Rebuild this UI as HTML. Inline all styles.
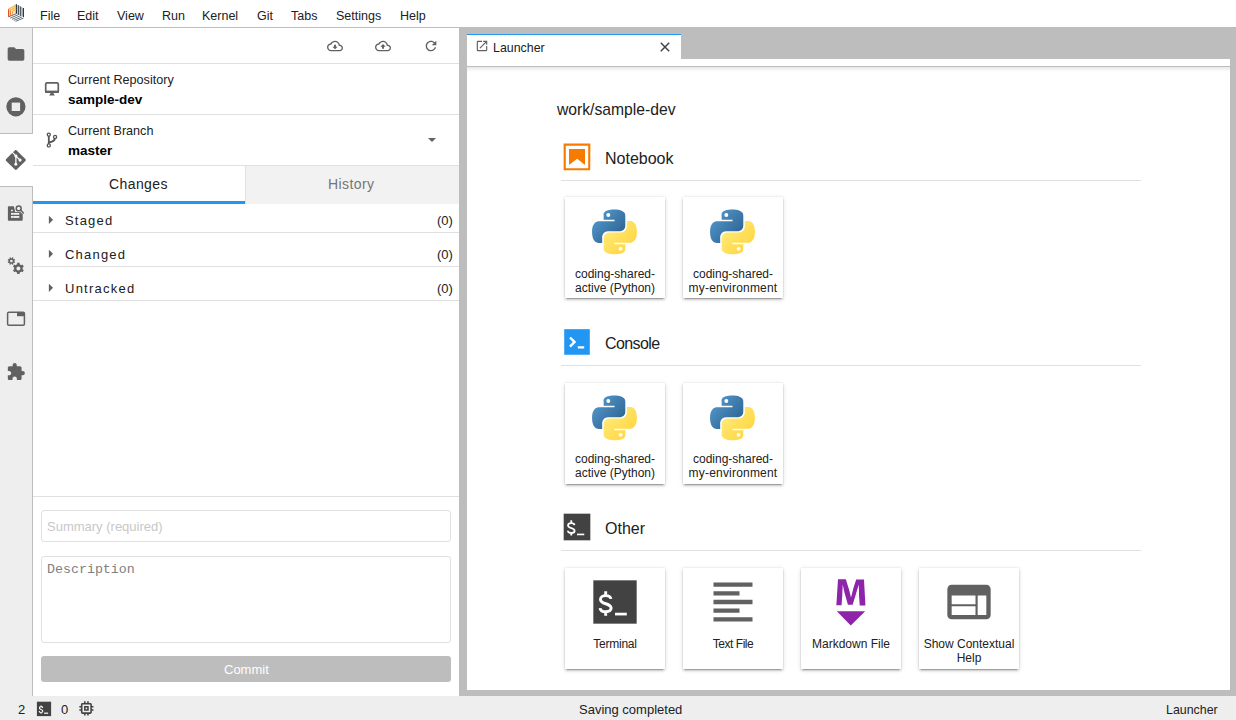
<!DOCTYPE html>
<html><head><meta charset="utf-8">
<style>
*{box-sizing:border-box;margin:0;padding:0}
html,body{width:1236px;height:720px;overflow:hidden;background:#fff;font-family:"Liberation Sans",sans-serif;color:#212121}
.a{position:absolute}
.t{position:absolute;white-space:nowrap;line-height:1}
svg{position:absolute;display:block}
</style></head><body>
<!-- MENUBAR -->
<div class="a" style="left:0;top:0;width:1236px;height:27px;background:#fff"></div>
<div class="a" style="left:0;top:27px;width:1236px;height:1px;background:#bdbdbd"></div>
<div id="menu" style="font-size:12.5px">
<span class="t" style="left:40px;top:10px">File</span>
<span class="t" style="left:77px;top:10px">Edit</span>
<span class="t" style="left:117px;top:10px">View</span>
<span class="t" style="left:162px;top:10px">Run</span>
<span class="t" style="left:202px;top:10px">Kernel</span>
<span class="t" style="left:257px;top:10px">Git</span>
<span class="t" style="left:291px;top:10px">Tabs</span>
<span class="t" style="left:336px;top:10px">Settings</span>
<span class="t" style="left:400px;top:10px">Help</span>
</div>

<!-- LEFT SIDEBAR -->
<div class="a" style="left:0;top:28px;width:32px;height:668px;background:#eeeeee"></div>
<div class="a" style="left:32px;top:28px;width:1px;height:668px;background:#bdbdbd"></div>
<div class="a" style="left:0;top:133px;width:33px;height:1px;background:#bdbdbd"></div>
<div class="a" style="left:0;top:134px;width:33px;height:52px;background:#fff"></div>
<div class="a" style="left:0;top:186px;width:33px;height:1px;background:#bdbdbd"></div>

<!-- SIDEBAR ICONS -->
<svg style="left:0;top:0" width="33" height="400" viewBox="0 0 33 400">
<g fill="#616161">
<!-- folder -->
<g transform="translate(6,44) scale(0.8333)"><path d="M10 4H4c-1.1 0-1.99.9-1.99 2L2 18c0 1.1.9 2 2 2h16c1.1 0 2-.9 2-2V8c0-1.1-.9-2-2-2h-8l-2-2z"/></g>
<!-- stop circle -->
<circle cx="15.9" cy="106.8" r="9.6"/>
<rect x="11.7" y="102.6" width="8.4" height="8.4" fill="#eeeeee"/>
<!-- git -->
<g transform="translate(5.8,150) scale(0.8333)"><path d="M23.546 10.93L13.067.452c-.604-.603-1.582-.603-2.188 0L8.708 2.627l2.76 2.76c.645-.215 1.379-.07 1.889.441.516.515.658 1.258.438 1.9l2.658 2.66c.645-.223 1.387-.078 1.9.435.721.72.721 1.884 0 2.604-.719.719-1.881.719-2.6 0-.539-.541-.674-1.337-.404-1.996L12.86 8.955v6.525c.176.086.342.203.488.348.713.721.713 1.883 0 2.6-.719.721-1.889.721-2.609 0-.719-.719-.719-1.879 0-2.598.182-.18.387-.316.605-.406V8.835c-.217-.091-.424-.222-.6-.401-.545-.545-.676-1.342-.396-2.009L7.636 3.7.45 10.881c-.6.605-.6 1.584 0 2.189l10.48 10.477c.604.604 1.582.604 2.186 0l10.43-10.43c.605-.603.605-1.582 0-2.187"/></g>
<!-- property inspector -->
<path d="M7.9 207a0.8 0.8 0 0 1 0.8-0.8H13.8L15.2 212H20.1L22.7 213.9V220a0.7 0.7 0 0 1-0.7 0.7H8.6a0.7 0.7 0 0 1-0.7-0.7z"/>
<g fill="#eeeeee"><rect x="11" y="209.8" width="1.9" height="1.4"/><rect x="11" y="212.9" width="8.3" height="1.9"/><rect x="11" y="216" width="8.3" height="1.9"/></g>
<g fill="#b0b0b0"><rect x="13.2" y="212.9" width="0.5" height="1.9"/><rect x="13.2" y="216" width="0.5" height="1.9"/></g>
<circle cx="18.7" cy="208.4" r="2.45" fill="none" stroke="#616161" stroke-width="1.5"/>
<path d="M20.6 210.1l2.8 2.9" stroke="#616161" stroke-width="1.5" stroke-linecap="round"/>
<!-- gears -->
<path fill-rule="evenodd" d="M14.27,261.43 L15.13,261.74 L14.56,263.11 L13.73,262.72 L13.12,263.33 L13.51,264.16 L12.14,264.73 L11.83,263.87 L10.97,263.87 L10.66,264.73 L9.29,264.16 L9.68,263.33 L9.07,262.72 L8.24,263.11 L7.67,261.74 L8.53,261.43 L8.53,260.57 L7.67,260.26 L8.24,258.89 L9.07,259.28 L9.68,258.67 L9.29,257.84 L10.66,257.27 L10.97,258.13 L11.83,258.13 L12.14,257.27 L13.51,257.84 L13.12,258.67 L13.73,259.28 L14.56,258.89 L15.13,260.26 L14.27,260.57Z M11.4 259.7a1.3 1.3 0 1 0 0.01 0z"/>
<path fill-rule="evenodd" d="M19.63,272.63 L19.64,273.96 L17.16,273.96 L17.17,272.63 L15.35,271.58 L14.20,272.26 L12.96,270.10 L14.13,269.45 L14.13,267.35 L12.96,266.70 L14.20,264.54 L15.35,265.22 L17.17,264.17 L17.16,262.84 L19.64,262.84 L19.63,264.17 L21.45,265.22 L22.60,264.54 L23.84,266.70 L22.67,267.35 L22.67,269.45 L23.84,270.10 L22.60,272.26 L21.45,271.58Z M18.4 266.4a2 2 0 1 0 0.01 0z"/>
<!-- window -->
<rect x="7.6" y="312.3" width="16.8" height="12.9" rx="1.2" fill="none" stroke="#616161" stroke-width="1.5"/>
<rect x="17" y="312" width="7.4" height="4.2"/>
<!-- puzzle -->
<g transform="translate(6.2,362.2) scale(0.81)"><path d="M20.5 11H19V7c0-1.1-.9-2-2-2h-4V3.5C13 2.12 11.88 1 10.5 1S8 2.12 8 3.5V5H4c-1.1 0-1.99.9-1.99 2v3.8H3.5c1.49 0 2.7 1.21 2.7 2.7s-1.21 2.7-2.7 2.7H2V20c0 1.1.9 2 2 2h3.8v-1.5c0-1.49 1.21-2.7 2.7-2.7 1.49 0 2.7 1.21 2.7 2.7V22H17c1.1 0 2-.9 2-2v-4h1.5c1.38 0 2.5-1.12 2.5-2.5S21.88 11 20.5 11z"/></g>
</g>
</svg>

<!-- GIT PANEL -->
<div class="a" style="left:33px;top:63px;width:426px;height:1px;background:#e0e0e0"></div>
<div class="a" style="left:33px;top:114px;width:426px;height:1px;background:#e0e0e0"></div>
<div class="a" style="left:33px;top:165px;width:426px;height:1px;background:#e0e0e0"></div>

<span class="t" style="left:68px;top:74px;font-size:12.6px">Current Repository</span>
<span class="t" style="left:68px;top:93px;font-size:13.5px;font-weight:bold;color:#000">sample-dev</span>
<span class="t" style="left:68px;top:125px;font-size:12.6px">Current Branch</span>
<span class="t" style="left:68px;top:144px;font-size:13.5px;font-weight:bold;color:#000">master</span>

<!-- tabs -->
<div class="a" style="left:245px;top:166px;width:214px;height:38px;background:#f2f2f2;border-left:1px solid #e0e0e0"></div>
<div class="a" style="left:33px;top:201px;width:212px;height:3px;background:#2196f3"></div>
<span class="t" style="left:109px;top:177px;font-size:14px;letter-spacing:0.4px">Changes</span>
<span class="t" style="left:328px;top:177px;font-size:14px;letter-spacing:0.4px;color:#757575">History</span>

<div class="a" style="left:33px;top:232px;width:426px;height:1px;background:#e0e0e0"></div>
<div class="a" style="left:33px;top:266px;width:426px;height:1px;background:#e0e0e0"></div>
<div class="a" style="left:33px;top:300px;width:426px;height:1px;background:#e0e0e0"></div>
<span class="t" style="left:65px;top:214px;font-size:13px;letter-spacing:1.2px">Staged</span>
<span class="t" style="left:65px;top:248px;font-size:13px;letter-spacing:1.2px">Changed</span>
<span class="t" style="left:65px;top:282px;font-size:13px;letter-spacing:1.25px">Untracked</span>
<span class="t" style="left:437px;top:214px;font-size:13px">(0)</span>
<span class="t" style="left:437px;top:248px;font-size:13px">(0)</span>
<span class="t" style="left:437px;top:282px;font-size:13px">(0)</span>

<div class="a" style="left:33px;top:496px;width:426px;height:1px;background:#e0e0e0"></div>
<div class="a" style="left:41px;top:510px;width:410px;height:32px;border:1px solid #e0e0e0;border-radius:3px"></div>
<span class="t" style="left:47px;top:520px;font-size:13px;color:#c8c8c8">Summary (required)</span>
<div class="a" style="left:41px;top:556px;width:410px;height:87px;border:1px solid #e0e0e0;border-radius:3px"></div>
<span class="t" style="left:47px;top:563px;font-size:13.3px;font-family:'Liberation Mono',monospace;color:#808080">Description</span>
<div class="a" style="left:41px;top:656px;width:410px;height:26px;background:#bdbdbd;border-radius:3px"></div>
<span class="t" style="left:224px;top:663px;font-size:13px;color:#fff">Commit</span>

<!-- GIT TOOLBAR ICONS -->
<svg style="left:327px;top:38px" width="16" height="16" viewBox="0 0 24 24"><path fill="#616161" d="M19.35 10.04C18.67 6.59 15.64 4 12 4 9.11 4 6.6 5.64 5.35 8.04 2.34 8.36 0 10.91 0 14c0 3.31 2.69 6 6 6h13c2.76 0 5-2.24 5-5 0-2.64-2.05-4.78-4.65-4.96zM19 18H6c-2.21 0-4-1.79-4-4 0-2.05 1.53-3.76 3.56-3.97l1.07-.11.5-.95C8.08 7.14 9.94 6 12 6c2.62 0 4.88 1.86 5.39 4.43l.3 1.5 1.53.11c1.56.1 2.78 1.41 2.78 2.96 0 1.65-1.35 3-3 3zm-5.55-8h-2.9v3H8l4 4 4-4h-2.55z"/></svg>
<svg style="left:375px;top:38px" width="16" height="16" viewBox="0 0 24 24"><path fill="#616161" d="M19.35 10.04C18.67 6.59 15.64 4 12 4 9.11 4 6.6 5.64 5.35 8.04 2.34 8.36 0 10.91 0 14c0 3.31 2.69 6 6 6h13c2.76 0 5-2.24 5-5 0-2.64-2.05-4.78-4.65-4.96zM19 18H6c-2.21 0-4-1.79-4-4 0-2.05 1.53-3.76 3.56-3.97l1.07-.11.5-.95C8.08 7.14 9.94 6 12 6c2.62 0 4.88 1.86 5.39 4.43l.3 1.5 1.53.11c1.56.1 2.78 1.41 2.78 2.96 0 1.65-1.35 3-3 3zM8 13h2.55v3h2.9v-3H16l-4-4z"/></svg>
<svg style="left:423px;top:37.6px" width="16" height="16" viewBox="0 0 24 24"><path fill="#616161" d="M17.65 6.35C16.2 4.9 14.21 4 12 4c-4.42 0-7.99 3.58-7.99 8s3.57 8 7.99 8c3.73 0 6.84-2.55 7.73-6h-2.08c-.82 2.33-3.04 4-5.65 4-3.31 0-6-2.69-6-6s2.69-6 6-6c1.66 0 3.14.69 4.22 1.78L13 11h7V4l-2.35 2.35z"/></svg>
<!-- monitor icon -->
<svg style="left:40px;top:75px" width="24" height="25" viewBox="40 75 24 25">
<rect x="45.7" y="82.8" width="12.6" height="9.4" rx="1.2" fill="none" stroke="#616161" stroke-width="1.7"/>
<rect x="45" y="90.6" width="14" height="2.3" fill="#616161"/>
<path d="M50.8 92.8h2.4l1.6 2.6h-5.6z" fill="#616161"/>
</svg>
<!-- branch icon -->
<svg style="left:40px;top:125px" width="24" height="25" viewBox="40 125 24 25">
<g fill="none" stroke="#555" stroke-width="1.3">
<circle cx="48.8" cy="134.6" r="1.55"/>
<circle cx="48.8" cy="145.4" r="1.55"/>
<circle cx="55.1" cy="136.9" r="1.55"/>
</g>
<path d="M48.8 136.1v7.8M48.9 142.4c2.6-0.4 5.6-1.2 6.1-3.9" fill="none" stroke="#555" stroke-width="1.8"/>
</svg>
<!-- caret -->
<svg style="left:427px;top:137px" width="10" height="6" viewBox="0 0 10 6"><path d="M1 1h8l-4 4z" fill="#616161"/></svg>
<!-- section carets -->
<svg style="left:45px;top:212px" width="12" height="80" viewBox="45 212 12 80">
<g fill="#616161"><path d="M48.9 215.8v8.1l4.1-4.05z"/><path d="M48.9 249.8v8.1l4.1-4.05z"/><path d="M48.9 283.8v8.1l4.1-4.05z"/></g>
</svg>

<!-- MAIN AREA -->
<div class="a" style="left:459px;top:28px;width:777px;height:668px;background:#bdbdbd"></div>
<div class="a" style="left:467px;top:59px;width:763px;height:7px;background:#fff"></div>
<div class="a" style="left:467px;top:66px;width:763px;height:1px;background:#bdbdbd"></div>
<div class="a" style="left:467px;top:34px;width:214px;height:32px;background:#fff"></div>
<div class="a" style="left:467px;top:34px;width:214px;height:1px;background:#2196f3"></div>
<span class="t" style="left:493px;top:42px;font-size:12.4px">Launcher</span>
<div class="a" style="left:467px;top:67px;width:763px;height:623px;background:#fff"></div>
<div class="a" style="left:467px;top:67px;width:763px;height:5px;background:linear-gradient(rgba(0,0,0,0.09),rgba(0,0,0,0))"></div>

<span class="t" style="left:557px;top:102px;font-size:15.7px">work/sample-dev</span>
<span class="t" style="left:605px;top:151px;font-size:16px">Notebook</span>
<div class="a" style="left:561px;top:180px;width:580px;height:1px;background:#e0e0e0"></div>
<span class="t" style="left:605px;top:336px;font-size:16px;letter-spacing:-0.6px">Console</span>
<div class="a" style="left:561px;top:365px;width:580px;height:1px;background:#e0e0e0"></div>
<span class="t" style="left:605px;top:521px;font-size:16px">Other</span>
<div class="a" style="left:561px;top:550px;width:580px;height:1px;background:#e0e0e0"></div>

<!-- TAB ICONS -->
<svg style="left:475px;top:39px" width="14" height="14" viewBox="0 0 24 24"><path fill="#616161" d="M19 19H5V5h7V3H5a2 2 0 00-2 2v14a2 2 0 002 2h14c1.1 0 2-.9 2-2v-7h-2v7zM14 3v2h3.59l-9.83 9.83 1.41 1.41L19 6.41V10h2V3h-7z"/></svg>
<svg style="left:659px;top:41px" width="12" height="12" viewBox="0 0 12 12"><path d="M1.8 1.8l8.4 8.4M10.2 1.8l-8.4 8.4" stroke="#444" stroke-width="1.5"/></svg>

<!-- SECTION ICONS -->
<svg style="left:561px;top:141px" width="32" height="32" viewBox="0 0 22 22"><g fill="#F57C00"><path d="M18.7 3.3v15.4H3.3V3.3h15.4m1.5-1.5H1.8v18.3h18.3l.1-18.3z"/><path d="M16.5 16.5l-5.4-4.3-5.6 4.3v-11h11z"/></g></svg>
<svg style="left:561px;top:326px" width="32" height="32" viewBox="0 0 200 200"><path fill="#2196F3" d="M20 19.8h160v159.9H20z"/><path fill="#fff" d="M105 127.3h40v12.8h-40zM51.1 77L74 99.9l-23.3 23.3 10.5 10.5 23.3-23.3L95 99.9 84.5 89.4 61.6 66.5z"/></svg>
<svg style="left:561px;top:511px" width="32" height="32" viewBox="0 0 24 24"><rect x="2" y="2" width="20" height="20" fill="#424242"/><path d="M10.1 10.6C10 9.6 9 9.05 7.7 9.05 6.3 9.05 5.3 9.8 5.3 10.8c0 2.5 4.9 1.5 4.9 4 0 1.1-1 1.7-2.5 1.7-1.5 0-2.5-.7-2.6-1.7M7.7 7v2.05M7.7 16.5v1.85" fill="none" stroke="#fff" stroke-width="1.35"/><rect x="12" y="16.95" width="5.45" height="1.25" fill="#fff"/></svg>

<!-- CARDS -->
<style>
.card{position:absolute;width:100px;height:101px;background:#fff;box-shadow:0 3px 1px -2px rgba(0,0,0,.2),0 2px 2px 0 rgba(0,0,0,.14),0 1px 5px 0 rgba(0,0,0,.12),0 0 1px rgba(0,0,0,.18)}
.lbl{position:absolute;left:0;width:100px;text-align:center;font-size:12px;line-height:13.7px;color:#212121;white-space:nowrap}
</style>
<div class="card" style="left:565px;top:197px"></div>
<div class="card" style="left:683px;top:197px"></div>
<div class="card" style="left:565px;top:383px"></div>
<div class="card" style="left:683px;top:383px"></div>
<div class="card" style="left:565px;top:568px"></div>
<div class="card" style="left:683px;top:568px"></div>
<div class="card" style="left:801px;top:568px"></div>
<div class="card" style="left:919px;top:568px"></div>

<svg width="0" height="0" style="position:absolute"><defs>
<linearGradient id="pya" x1="0%" y1="0%" x2="80%" y2="75%"><stop offset="0%" stop-color="#5A9FD4"/><stop offset="100%" stop-color="#306998"/></linearGradient>
<linearGradient id="pyb" x1="20%" y1="25%" x2="90%" y2="90%"><stop offset="0%" stop-color="#FFE873"/><stop offset="100%" stop-color="#FFD43B"/></linearGradient>
<g id="py"><path fill="url(#pya)" d="M126.916.072c-64.832 0-60.784 28.115-60.784 28.115l.072 29.128h61.868v8.745H41.631S.145 61.355.145 126.77c0 65.417 36.21 63.097 36.21 63.097h21.61v-30.356s-1.165-36.21 35.632-36.21h61.362s34.475.557 34.475-33.319V33.97S194.67.072 126.916.072zM92.802 19.66a11.12 11.12 0 0 1 11.13 11.13 11.12 11.12 0 0 1-11.13 11.13 11.12 11.12 0 0 1-11.13-11.13 11.12 11.12 0 0 1 11.13-11.13z"/><path fill="url(#pyb)" d="M128.757 254.126c64.832 0 60.784-28.115 60.784-28.115l-.072-29.127H127.6v-8.745h86.441s41.486 4.705 41.486-60.712c0-65.416-36.21-63.096-36.21-63.096h-21.61v30.355s1.165 36.21-35.632 36.21h-61.362s-34.475-.557-34.475 33.32v56.013s-5.235 33.897 62.518 33.897zm34.114-19.586a11.12 11.12 0 0 1-11.13-11.13 11.12 11.12 0 0 1 11.13-11.131 11.12 11.12 0 0 1 11.13 11.13 11.12 11.12 0 0 1-11.13 11.13z"/></g>
</defs></svg>
<svg style="left:592.3px;top:209px" width="45" height="46" viewBox="0 0 256 255"><use href="#py"/></svg>
<svg style="left:710.3px;top:209px" width="45" height="46" viewBox="0 0 256 255"><use href="#py"/></svg>
<svg style="left:592.3px;top:395px" width="45" height="46" viewBox="0 0 256 255"><use href="#py"/></svg>
<svg style="left:710.3px;top:395px" width="45" height="46" viewBox="0 0 256 255"><use href="#py"/></svg>

<div class="a" style="left:565px;top:268px;width:100px;height:30px"><div class="lbl" style="top:0">coding-shared-<br>active (Python)</div></div>
<div class="a" style="left:683px;top:268px;width:100px;height:30px"><div class="lbl" style="top:0">coding-shared-<br><span style="letter-spacing:0.2px">my-environment</span></div></div>
<div class="a" style="left:565px;top:453px;width:100px;height:30px"><div class="lbl" style="top:0">coding-shared-<br>active (Python)</div></div>
<div class="a" style="left:683px;top:453px;width:100px;height:30px"><div class="lbl" style="top:0">coding-shared-<br><span style="letter-spacing:0.2px">my-environment</span></div></div>

<!-- other icons -->
<svg style="left:589px;top:576px" width="52" height="52" viewBox="0 0 24 24"><rect x="2" y="2" width="20" height="20" fill="#424242"/><path d="M10.1 10.6C10 9.6 9 9.05 7.7 9.05 6.3 9.05 5.3 9.8 5.3 10.8c0 2.5 4.9 1.5 4.9 4 0 1.1-1 1.7-2.5 1.7-1.5 0-2.5-.7-2.6-1.7M7.7 7v2.05M7.7 16.5v1.85" fill="none" stroke="#fff" stroke-width="1.35"/><rect x="12" y="16.95" width="5.45" height="1.25" fill="#fff"/></svg>
<svg style="left:707px;top:576px" width="52" height="52" viewBox="0 0 24 24"><path fill="#616161" d="M15 15H3v2h12v-2zm0-8H3v2h12V7zM3 13h18v-2H3v2zm0 8h18v-2H3v2zM3 3v2h18V3H3z"/></svg>
<svg style="left:825px;top:576px" width="52" height="52" viewBox="0 0 22 22"><path fill="#8E24AA" d="M5 14.9h12l-6.1 6zm9.4-6.8c0-1.3-.1-2.9-.1-4.5-.4 1.4-.9 2.9-1.3 4.3l-1.3 4.3h-2L8.5 7.9c-.4-1.3-.7-2.9-1-4.3-.1 1.6-.1 3.2-.2 4.6L7 12.4H4.8l.7-11h3.3L10 5.2c.4 1.2.7 2.7 1 3.9.3-1.2.7-2.6 1-3.9l1.2-3.7h3.3l.6 11h-2.4l-.3-4.2z"/></svg>
<svg style="left:943px;top:576px" width="52" height="52" viewBox="0 0 24 24"><path fill="#616161" d="M20 4H4c-1.1 0-1.99.9-1.99 2L2 18c0 1.1.9 2 2 2h16c1.1 0 2-.9 2-2V6c0-1.1-.9-2-2-2zm-5 14H4v-4h11v4zm0-5H4V9h11v4zm5 5h-4V9h4v9z"/></svg>
<div class="a" style="left:565px;top:638px;width:100px;height:30px"><div class="lbl" style="top:0;letter-spacing:-0.25px">Terminal</div></div>
<div class="a" style="left:683px;top:638px;width:100px;height:30px"><div class="lbl" style="top:0;letter-spacing:-0.45px">Text File</div></div>
<div class="a" style="left:801px;top:638px;width:100px;height:30px"><div class="lbl" style="top:0">Markdown File</div></div>
<div class="a" style="left:919px;top:638px;width:100px;height:30px"><div class="lbl" style="top:0">Show Contextual<br>Help</div></div>

<!-- STATUS BAR -->
<div class="a" style="left:0;top:696px;width:1236px;height:24px;background:#eeeeee"></div>
<span class="t" style="left:18px;top:703px;font-size:13px">2</span>
<span class="t" style="left:61px;top:703px;font-size:13px">0</span>
<span class="t" style="left:579px;top:703px;font-size:13px">Saving completed</span>
<span class="t" style="left:1166px;top:704px;font-size:12.4px">Launcher</span>
<!-- status icons -->
<svg style="left:36px;top:701px" width="16" height="16" viewBox="36 701 16 16"><rect x="36.9" y="701.7" width="14.2" height="14.4" fill="#424242"/><path d="M42.7 707.9c0-.8-.7-1.3-1.6-1.3-1 0-1.7.6-1.7 1.3 0 1.9 3.4 1.2 3.4 3.2 0 .8-.7 1.4-1.8 1.4s-1.8-.6-1.8-1.4M41.1 705.4v1.2M41.1 712.5v1.3" fill="none" stroke="#fff" stroke-width="1.1"/><rect x="44.1" y="712.6" width="4" height="1.2" fill="#fff"/></svg>
<svg style="left:77px;top:698.6px" width="18.8" height="18.8" viewBox="0 0 24 24"><path fill="#424242" d="M15 9H9v6h6V9zm-2 4h-2v-2h2v2zm8-2V9h-2V7c0-1.1-.9-2-2-2h-2V3h-2v2h-2V3H9v2H7c-1.1 0-2 .9-2 2v2H3v2h2v2H3v2h2v2c0 1.1.9 2 2 2h2v2h2v-2h2v2h2v-2h2c1.1 0 2-.9 2-2v-2h2v-2h-2v-2h2zm-4 6H7V7h10v10z"/></svg>
<!-- LOGO -->
<svg style="left:4px;top:2px" width="24" height="24" viewBox="4 2 24 24">
<path d="M16.4 4.2L23.9 8.2V17L16.4 13.8z" fill="#8d979f" opacity="0.55"/>
<path d="M8.2 9.2L16.2 4.4V13.6L8.2 17z" fill="#f3a860" opacity="0.3"/>
<g fill="none" stroke-width="0.9">
<path d="M16.4 4.2v9.6" stroke="#27313b" stroke-width="1.2"/>
<path d="M18.5 5.3v9.7" stroke="#3f4a55"/>
<path d="M20.6 6.4v9.9" stroke="#3f4a55"/>
<path d="M23.4 8v9" stroke="#27313b" stroke-width="1.1"/>
<path d="M8.4 16.9l8-3.2M10.2 18.1l7.9-3.3M12 19.3l7.9-3.3M13.8 20.4l8-3.3M15.6 21.4l8-3.4" stroke="#56636d"/>
<path d="M8.6 9v7.8" stroke="#e4541b" stroke-width="1.2"/>
<path d="M10.5 10.2v5.8" stroke="#eb7a35"/>
<path d="M12.4 11.3v3.8" stroke="#ef9445"/>
<path d="M8.4 9.2l7.6-4.3M10.3 10.3l5.8-3.3M12.2 11.4l4-2.3" stroke="#f5bb2e" stroke-width="1.1"/>
</g>
</svg>

</body></html>
